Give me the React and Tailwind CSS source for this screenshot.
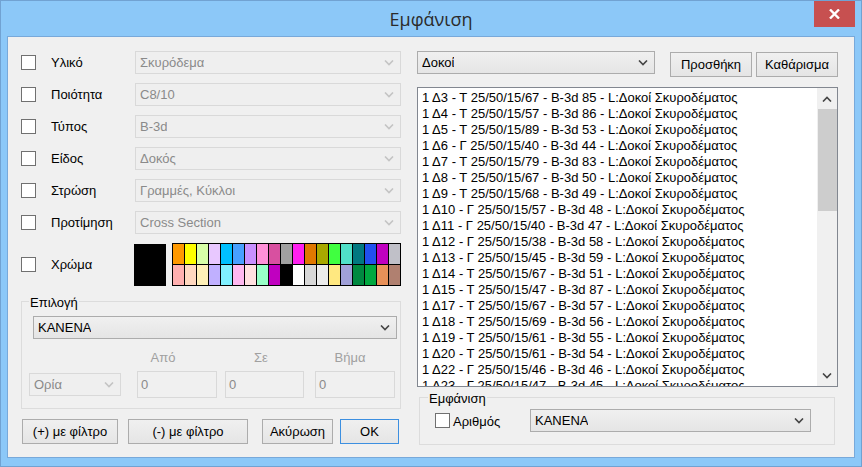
import React from "react";

const palette = [
  "#ff9900", "#ffff00", "#d8ffa8", "#e8c8ff", "#00c0ff", "#48a0ff", "#c890ff", "#ff90d8", "#d850a0", "#a0a0a0",
  "#ff20f0", "#e07800", "#a8a800", "#40ff40", "#50e0c8", "#007880", "#2050f0", "#c000c0", "#c0c0c8",
  "#ffb0b0", "#ffd8c0", "#fff0b8", "#c0b0ff", "#80f0ff", "#ffb8f0", "#ffe0e0", "#98ffc8", "#c000c0", "#000000",
  "#ffffff", "#d8d8d8", "#ececec", "#ffe880", "#a0a0d8", "#008840", "#00a840", "#e89058", "#b08070",
];

const beams = [
  "1 Δ3 - Τ 25/50/15/67 - B-3d 85",
  "1 Δ4 - Τ 25/50/15/57 - B-3d 86",
  "1 Δ5 - Τ 25/50/15/89 - B-3d 53",
  "1 Δ6 - Γ 25/50/15/40 - B-3d 44",
  "1 Δ7 - Τ 25/50/15/79 - B-3d 83",
  "1 Δ8 - Τ 25/50/15/67 - B-3d 50",
  "1 Δ9 - Τ 25/50/15/68 - B-3d 49",
  "1 Δ10 - Γ 25/50/15/57 - B-3d 48",
  "1 Δ11 - Γ 25/50/15/40 - B-3d 47",
  "1 Δ12 - Γ 25/50/15/38 - B-3d 58",
  "1 Δ13 - Γ 25/50/15/45 - B-3d 59",
  "1 Δ14 - Τ 25/50/15/67 - B-3d 51",
  "1 Δ15 - Τ 25/50/15/47 - B-3d 87",
  "1 Δ17 - Τ 25/50/15/67 - B-3d 57",
  "1 Δ18 - Τ 25/50/15/69 - B-3d 56",
  "1 Δ19 - Τ 25/50/15/61 - B-3d 55",
  "1 Δ20 - Τ 25/50/15/61 - B-3d 54",
  "1 Δ22 - Γ 25/50/15/46 - B-3d 46",
  "1 Δ23 - Γ 25/50/15/47 - B-3d 45",
];

const filters = [
  { label: "Υλικό", value: "Σκυρόδεμα" },
  { label: "Ποιότητα", value: "C8/10" },
  { label: "Τύπος", value: "B-3d" },
  { label: "Είδος", value: "Δοκός" },
  { label: "Στρώση", value: "Γραμμές, Κύκλοι" },
  { label: "Προτίμηση", value: "Cross Section" },
];

const Chevron = ({ up, disabled }) => (
  <svg width="10" height="6" viewBox="0 0 10 6" className="shrink-0">
    <polyline
      points={up ? "1,5.5 5,1.5 9,5.5" : "1,0.5 5,4.5 9,0.5"}
      fill="none"
      stroke={disabled ? "#c4c4c4" : "#444444"}
      strokeWidth="1.6"
    />
  </svg>
);

const Select = ({ value, disabled, className }) => (
  <div
    className={`flex items-center justify-between h-[23px] pl-[4px] pr-[6px] border ${
      disabled
        ? "border-[#d9d9d9] bg-[#efefef] text-[#8a8a8a]"
        : "border-[#acacac] bg-gradient-to-b from-[#f0f0f0] to-[#e5e5e5] text-black"
    } ${className}`}
  >
    <span className="truncate">{value}</span>
    <Chevron disabled={disabled} />
  </div>
);

const Checkbox = () => (
  <div className="w-[15px] h-[15px] border border-[#707070] bg-white shrink-0" />
);

const Button = ({ children, className }) => (
  <div
    className={`flex items-center justify-center h-[25px] border bg-gradient-to-b from-[#f0f0f0] to-[#e5e5e5] ${className}`}
  >
    {children}
  </div>
);

export default function App() {
  return (
    <div className="w-[862px] h-[467px] bg-[#8cc8f8] border border-[#71a2d2] flex flex-col font-['Liberation_Sans',Arial,sans-serif] text-[13px] text-black">
      {/* title bar */}
      <div className="relative h-[35px] flex items-center justify-center">
        <span className="font-['Open_Sans',sans-serif] text-[18px] text-[#2b2b2b] mt-[2px]">Εμφάνιση</span>
        <div className="absolute right-[6px] top-0 w-[41px] h-[26px] bg-[#c75050] flex items-center justify-center">
          <svg width="11" height="10" viewBox="0 0 11 10">
            <path d="M1 0.5 L10 9.5 M10 0.5 L1 9.5" stroke="#fff" strokeWidth="2.4" />
          </svg>
        </div>
      </div>

      {/* client area */}
      <div className="flex-1 mx-[6px] mb-[8px] border border-[#78a9da] bg-[#f0f0f0] flex pl-[13px] pt-[14px]">
        {/* left column */}
        <div className="w-[380px] flex flex-col">
          <div className="flex flex-col gap-[9px]">
            {filters.map((f) => (
              <div key={f.label} className="flex items-center h-[23px]">
                <Checkbox />
                <span className="ml-[15px] w-[84px] mt-[1px]">{f.label}</span>
                <Select value={f.value} disabled className="w-[266px]" />
              </div>
            ))}
          </div>

          <div className="flex items-center h-[43px] mt-[9px]">
            <Checkbox />
            <span className="ml-[15px] w-[84px]">Χρώμα</span>
            <div className="w-[32px] h-[42px] bg-black" />
            <div className="ml-[6px] grid grid-cols-[repeat(19,11px)] gap-[1px] bg-black border border-black">
              {palette.map((c, i) => (
                <div key={i} className="h-[20px]" style={{ backgroundColor: c }} />
              ))}
            </div>
          </div>

          {/* Επιλογή group */}
          <div className="relative mt-[15px] w-[380px] h-[108px] border border-[#dcdcdc] pl-[11px] pt-[14px]">
            <span className="absolute -top-[9px] left-[7px] bg-[#f0f0f0] px-[1px]">Επιλογή</span>
            <Select value="ΚΑΝΕΝΑ" className="w-[364px]" />
            <div className="flex h-[15px] mt-[11px] text-[#a0a0a0] leading-[15px]">
              <span className="ml-[100px] w-[60px] text-center">Από</span>
              <span className="ml-[38px] w-[60px] text-center">Σε</span>
              <span className="ml-[29px] w-[60px] text-center">Βήμα</span>
            </div>
            <div className="flex items-center h-[27px] mt-[6px] -ml-[4px]">
              <Select value="Ορία" disabled className="w-[92px]" />
              {["w-[80px] ml-[16px]", "w-[79px] ml-[8px]", "w-[80px] ml-[11px]"].map((c, i) => (
                <div
                  key={i}
                  className={`h-[27px] border border-[#d9d9d9] bg-[#f0f0f0] text-[#8a8a8a] pl-[3px] pt-[3px] ${c}`}
                >
                  0
                </div>
              ))}
            </div>
          </div>

          <div className="flex mt-[10px]">
            <Button className="ml-[1px] w-[96px] border-[#acacac]">(+) με φίλτρο</Button>
            <Button className="ml-[10px] w-[120px] border-[#acacac]">(-) με φίλτρο</Button>
            <Button className="ml-[14px] w-[71px] border-[#acacac]">Ακύρωση</Button>
            <Button className="ml-[7px] w-[59px] border-[#3c8fe0]">OK</Button>
          </div>
        </div>

        {/* right column */}
        <div className="ml-[16px] w-[421px] flex flex-col">
          <div className="flex items-start h-[26px]">
            <Select value="Δοκοί" className="w-[238px]" />
            <Button className="ml-[15px] mt-[1px] w-[82px] border-[#acacac]">Προσθήκη</Button>
            <Button className="ml-[4px] mt-[1px] w-[82px] border-[#acacac]">Καθάρισμα</Button>
          </div>

          <div className="mt-[10px] w-[421px] h-[300px] border border-[#828790] bg-white flex">
            <div className="flex-1 overflow-hidden pl-[4px] pt-[2px]">
              {beams.map((b) => (
                <div key={b} className="h-[16px] leading-[16px] whitespace-nowrap">
                  {b} - L:Δοκοί Σκυροδέματος
                </div>
              ))}
            </div>
            <div className="w-[20px] bg-[#f0f0f0] flex flex-col items-center">
              <div className="h-[21px] flex items-center justify-center">
                <Chevron up />
              </div>
              <div className="w-[19px] h-[102px] bg-[#cdcdcd]" />
              <div className="flex-1" />
              <div className="h-[21px] flex items-center justify-center">
                <Chevron />
              </div>
            </div>
          </div>

          {/* Εμφάνιση group */}
          <div className="relative mt-[10px] ml-[2px] w-[416px] h-[48px] border border-[#dcdcdc] flex items-start pt-[11px] pl-[15px]">
            <span className="absolute -top-[9px] left-[8px] bg-[#f0f0f0] px-[1px]">Εμφάνιση</span>
            <div className="flex items-center h-[23px]">
              <Checkbox />
              <span className="ml-[3px] w-[77px] mt-[2px]">Αριθμός</span>
            </div>
            <Select value="ΚΑΝΕΝΑ" className="w-[281px]" />
          </div>
        </div>
      </div>
    </div>
  );
}
